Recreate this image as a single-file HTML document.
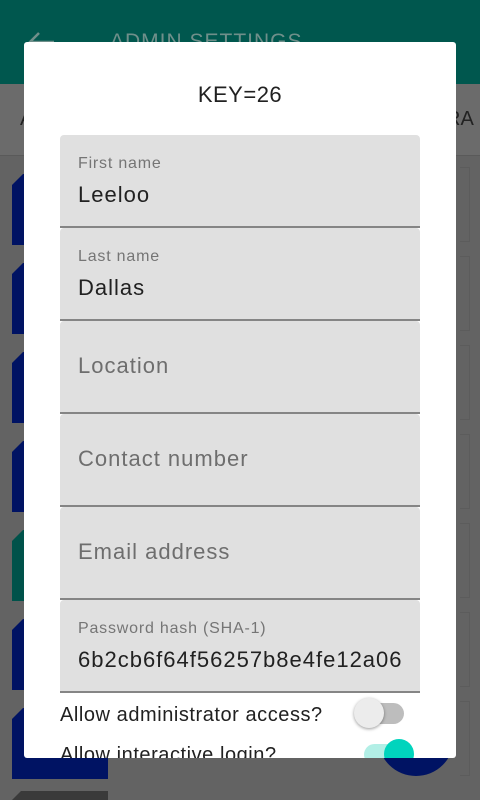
<!DOCTYPE html>
<html><head><meta charset="utf-8"><style>
*{margin:0;padding:0;box-sizing:border-box}
html,body{width:480px;height:800px;overflow:hidden}
body{position:relative;background:#636363;font-family:"Liberation Sans",Roboto,sans-serif}
.hdr{position:absolute;left:0;top:0;width:480px;height:84px;background:#00574e}
.hdr span{position:absolute;left:110px;top:30px;color:#6f8f8a;font-size:21px;letter-spacing:1px}
.tabs{position:absolute;left:0;top:84px;width:480px;height:72px;background:#6b6b6b;border-bottom:1px solid #5a5a5a}
.tabs span{position:absolute;top:24px;color:#222;font-size:20px}
.blue{position:absolute;left:12px;width:20px;height:71px;background:#001363;clip-path:polygon(0 11px,11px 0,100% 0,100% 100%,0 100%)}
.card{position:absolute;left:460px;width:10px;height:75px;border:1px solid #5c5c5c;border-left:none}
.dlg{position:absolute;left:24px;top:42px;width:432px;height:716px;background:#fff;border-radius:3px;overflow:hidden}
.title{position:absolute;top:40px;width:100%;text-align:center;font-size:22px;color:#212121;letter-spacing:.5px}
.f{position:absolute;left:36px;width:360px;height:93px;background:#e0e0e0;border-radius:4px 4px 0 0;border-bottom:2px solid #858585}
.f .l{position:absolute;left:18px;top:20px;font-size:16px;color:#757575;letter-spacing:.8px}
.f .v{position:absolute;left:18px;top:47px;font-size:22px;color:#212121;letter-spacing:1px}
.f .p{position:absolute;left:18px;top:32px;font-size:22px;color:#6e6e6e;letter-spacing:1px}
.sw{position:absolute;left:36px;font-size:20px;color:#212121;letter-spacing:.55px}
</style></head><body>
<div class="hdr"><svg style="position:absolute;left:26px;top:30px" width="30" height="24" viewBox="0 0 30 24"><path d="M28 12H4M13 3L4 12l9 9" stroke="#6f8f8a" stroke-width="2.5" fill="none"/></svg><span>ADMIN SETTINGS</span></div>
<div class="tabs"><span style="left:20px">A</span><span style="left:446px">RA</span></div>
<div class="blue" style="top:174px"></div>
<div class="blue" style="top:263px"></div>
<div class="blue" style="top:352px"></div>
<div class="blue" style="top:441px"></div>
<div class="blue" style="top:530px;background:#00524a"></div>
<div class="blue" style="top:619px"></div>
<div class="blue" style="top:708px;width:96px"></div>
<div style="position:absolute;left:12px;top:791px;width:96px;height:9px;background:#3a3a3a;clip-path:polygon(0 9px,9px 0,100% 0,100% 100%,0 100%)"></div>
<div class="card" style="top:167px"></div><div class="card" style="top:256px"></div><div class="card" style="top:345px"></div><div class="card" style="top:434px"></div><div class="card" style="top:523px"></div><div class="card" style="top:612px"></div><div class="card" style="top:701px"></div>
<div style="position:absolute;left:378px;top:700px;width:76px;height:76px;border-radius:50%;background:#001363"></div>
<div class="dlg">
<div class="title">KEY=26</div>
<div class="f" style="top:93px"><div class="l">First name</div><div class="v">Leeloo</div></div>
<div class="f" style="top:186px"><div class="l">Last name</div><div class="v">Dallas</div></div>
<div class="f" style="top:279px"><div class="p">Location</div></div>
<div class="f" style="top:372px"><div class="p">Contact number</div></div>
<div class="f" style="top:465px"><div class="p">Email address</div></div>
<div class="f" style="top:558px"><div class="l">Password hash (SHA-1)</div><div class="v">6b2cb6f64f56257b8e4fe12a06</div></div>
<div class="sw" style="top:662px">Allow administrator access?</div>
<div style="position:absolute;left:336px;top:661px;width:44px;height:21px;border-radius:11px;background:#bdbdbd"></div>
<div style="position:absolute;left:330px;top:656px;width:30px;height:30px;border-radius:50%;background:#ececec;box-shadow:0 1px 3px rgba(0,0,0,.4)"></div>
<div class="sw" style="top:702px">Allow interactive login?</div>
<div style="position:absolute;left:340px;top:702px;width:44px;height:21px;border-radius:11px;background:#b2efe6"></div>
<div style="position:absolute;left:360px;top:697px;width:30px;height:30px;border-radius:50%;background:#00d4bd"></div>
</div>
</body></html>
